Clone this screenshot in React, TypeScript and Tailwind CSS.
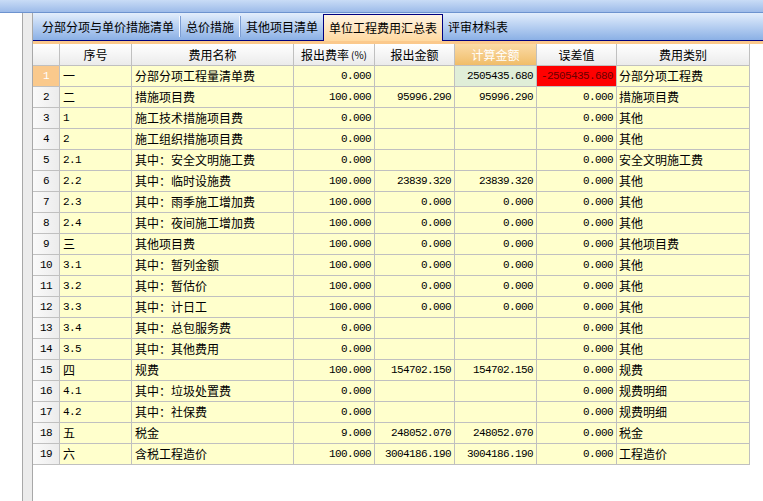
import React from "react";

type Row = {
  no: string;
  name: string;
  rate: string;
  bid: string;
  calc: string;
  diff: string;
  kind: string;
};

const rows: Row[] = [
  { no: "一", name: "分部分项工程量清单费", rate: "0.000", bid: "", calc: "2505435.680", diff: "-2505435.680", kind: "分部分项工程费" },
  { no: "二", name: "措施项目费", rate: "100.000", bid: "95996.290", calc: "95996.290", diff: "0.000", kind: "措施项目费" },
  { no: "1", name: "施工技术措施项目费", rate: "0.000", bid: "", calc: "", diff: "0.000", kind: "其他" },
  { no: "2", name: "施工组织措施项目费", rate: "0.000", bid: "", calc: "", diff: "0.000", kind: "其他" },
  { no: "2.1", name: "其中：安全文明施工费", rate: "0.000", bid: "", calc: "", diff: "0.000", kind: "安全文明施工费" },
  { no: "2.2", name: "其中：临时设施费", rate: "100.000", bid: "23839.320", calc: "23839.320", diff: "0.000", kind: "其他" },
  { no: "2.3", name: "其中：雨季施工增加费", rate: "100.000", bid: "0.000", calc: "0.000", diff: "0.000", kind: "其他" },
  { no: "2.4", name: "其中：夜间施工增加费", rate: "100.000", bid: "0.000", calc: "0.000", diff: "0.000", kind: "其他" },
  { no: "三", name: "其他项目费", rate: "100.000", bid: "0.000", calc: "0.000", diff: "0.000", kind: "其他项目费" },
  { no: "3.1", name: "其中：暂列金额", rate: "100.000", bid: "0.000", calc: "0.000", diff: "0.000", kind: "其他" },
  { no: "3.2", name: "其中：暂估价", rate: "100.000", bid: "0.000", calc: "0.000", diff: "0.000", kind: "其他" },
  { no: "3.3", name: "其中：计日工", rate: "100.000", bid: "0.000", calc: "0.000", diff: "0.000", kind: "其他" },
  { no: "3.4", name: "其中：总包服务费", rate: "0.000", bid: "", calc: "", diff: "0.000", kind: "其他" },
  { no: "3.5", name: "其中：其他费用", rate: "0.000", bid: "", calc: "", diff: "0.000", kind: "其他" },
  { no: "四", name: "规费", rate: "100.000", bid: "154702.150", calc: "154702.150", diff: "0.000", kind: "规费" },
  { no: "4.1", name: "其中：垃圾处置费", rate: "0.000", bid: "", calc: "", diff: "0.000", kind: "规费明细" },
  { no: "4.2", name: "其中：社保费", rate: "0.000", bid: "", calc: "", diff: "0.000", kind: "规费明细" },
  { no: "五", name: "税金", rate: "9.000", bid: "248052.070", calc: "248052.070", diff: "0.000", kind: "税金" },
  { no: "六", name: "含税工程造价", rate: "100.000", bid: "3004186.190", calc: "3004186.190", diff: "0.000", kind: "工程造价" },
];

const cjk = "font-['Noto_Sans_CJK_SC',sans-serif]";
const mono = "font-['Liberation_Mono','Noto_Sans_CJK_SC',monospace] text-[11px] tracking-[-0.6px]";
const cell = "h-[21px] shrink-0 border-r border-b border-[#c0c0c0] flex items-center whitespace-nowrap overflow-hidden";

function Tab({ label, active }: { label: string; active?: boolean }) {
  if (active) {
    return (
      <div className="relative z-10 mt-[1px] -mb-[1px] flex items-center px-[5px] border border-b-0 border-[#000080] bg-gradient-to-b from-[#fff4e2] to-[#ffd9a0] text-[12px] text-black">
        {label}
      </div>
    );
  }
  return <div className="flex items-center px-[5px] text-[12px] text-black">{label}</div>;
}

function Sep() {
  return (
    <div className="flex my-[3px]">
      <div className="w-[1px] bg-[#f4f8ff]" />
      <div className="w-[1px] bg-[#7d9ed4]" />
    </div>
  );
}

export default function App() {
  return (
    <div className={`w-[763px] h-[501px] flex flex-col bg-white overflow-hidden ${cjk}`}>
      {/* title strip */}
      <div className="h-[13px] shrink-0 bg-gradient-to-b from-[#c9dcf6] to-[#9dbbe9] border-b border-[#6d93cf]" />

      <div className="flex flex-1 min-h-0">
        <div className="w-[22px] shrink-0 bg-white" />
        <div className="w-[11px] shrink-0 bg-[#ececec] border-l border-r border-[#a8a8a8]" />

        <div className="flex-1 flex flex-col min-w-0">
          {/* tabs */}
          <div className="h-[28px] shrink-0 flex items-stretch pl-[4px] bg-gradient-to-b from-[#e3eefc] to-[#8bb0e5] border-b border-[#000080]">
            <Tab label="分部分项与单价措施清单" />
            <Sep />
            <Tab label="总价措施" />
            <Sep />
            <Tab label="其他项目清单" />
            <Tab label="单位工程费用汇总表" active />
            <Tab label="评审材料表" />
          </div>
          <div className="h-[3px] shrink-0 bg-[#fbc98c]" />

          {/* header */}
          <div className="flex text-[12px] text-black">
            <div className={`${cell} h-[22px] w-[27px] bg-gradient-to-b from-white to-[#ebebeb]`} />
            <div className={`${cell} h-[22px] w-[72px] justify-center bg-gradient-to-b from-white to-[#ebebeb]`}>序号</div>
            <div className={`${cell} h-[22px] w-[162px] justify-center bg-gradient-to-b from-white to-[#ebebeb]`}>费用名称</div>
            <div className={`${cell} h-[22px] w-[81px] justify-center bg-gradient-to-b from-white to-[#ebebeb]`}>
              报出费率<span className="text-[10px] ml-[2px]">(%)</span>
            </div>
            <div className={`${cell} h-[22px] w-[80px] justify-center bg-gradient-to-b from-white to-[#ebebeb]`}>报出金额</div>
            <div className={`${cell} h-[22px] w-[82px] justify-center bg-gradient-to-b from-[#fbdba6] to-[#f0bd68] text-white`}>计算金额</div>
            <div className={`${cell} h-[22px] w-[80px] justify-center bg-gradient-to-b from-white to-[#ebebeb]`}>误差值</div>
            <div className={`${cell} h-[22px] w-[133px] justify-center bg-gradient-to-b from-white to-[#ebebeb]`}>费用类别</div>
          </div>

          {/* rows */}
          {rows.map((r, i) => {
            const first = i === 0;
            return (
              <div key={i} className="flex text-[12px] text-black">
                <div
                  className={`${cell} w-[27px] justify-center ${mono} ${
                    first ? "bg-[#fac98c] text-white" : "bg-gradient-to-r from-[#fafafa] to-[#ececec]"
                  }`}
                >
                  {i + 1}
                </div>
                <div className={`${cell} w-[72px] pl-[3px] bg-[#ffffcc] ${/[0-9]/.test(r.no) ? mono : ""}`}>{r.no}</div>
                <div className={`${cell} w-[162px] pl-[3px] bg-[#ffffcc]`}>{r.name}</div>
                <div className={`${cell} w-[81px] justify-end pr-[3px] bg-[#ffffcc] ${mono}`}>{r.rate}</div>
                <div className={`${cell} w-[80px] justify-end pr-[3px] bg-[#ffffcc] ${mono}`}>{r.bid}</div>
                <div className={`${cell} w-[82px] justify-end pr-[3px] ${first ? "bg-[#e0eed8]" : "bg-[#ffffcc]"} ${mono}`}>
                  {r.calc}
                </div>
                <div
                  className={`${cell} w-[80px] justify-end pr-[3px] ${first ? "bg-[#ff0000] text-[#6b0000]" : "bg-[#ffffcc]"} ${mono}`}
                >
                  {r.diff}
                </div>
                <div className={`${cell} w-[133px] pl-[2px] bg-[#ffffcc]`}>{r.kind}</div>
              </div>
            );
          })}
        </div>
      </div>
    </div>
  );
}
